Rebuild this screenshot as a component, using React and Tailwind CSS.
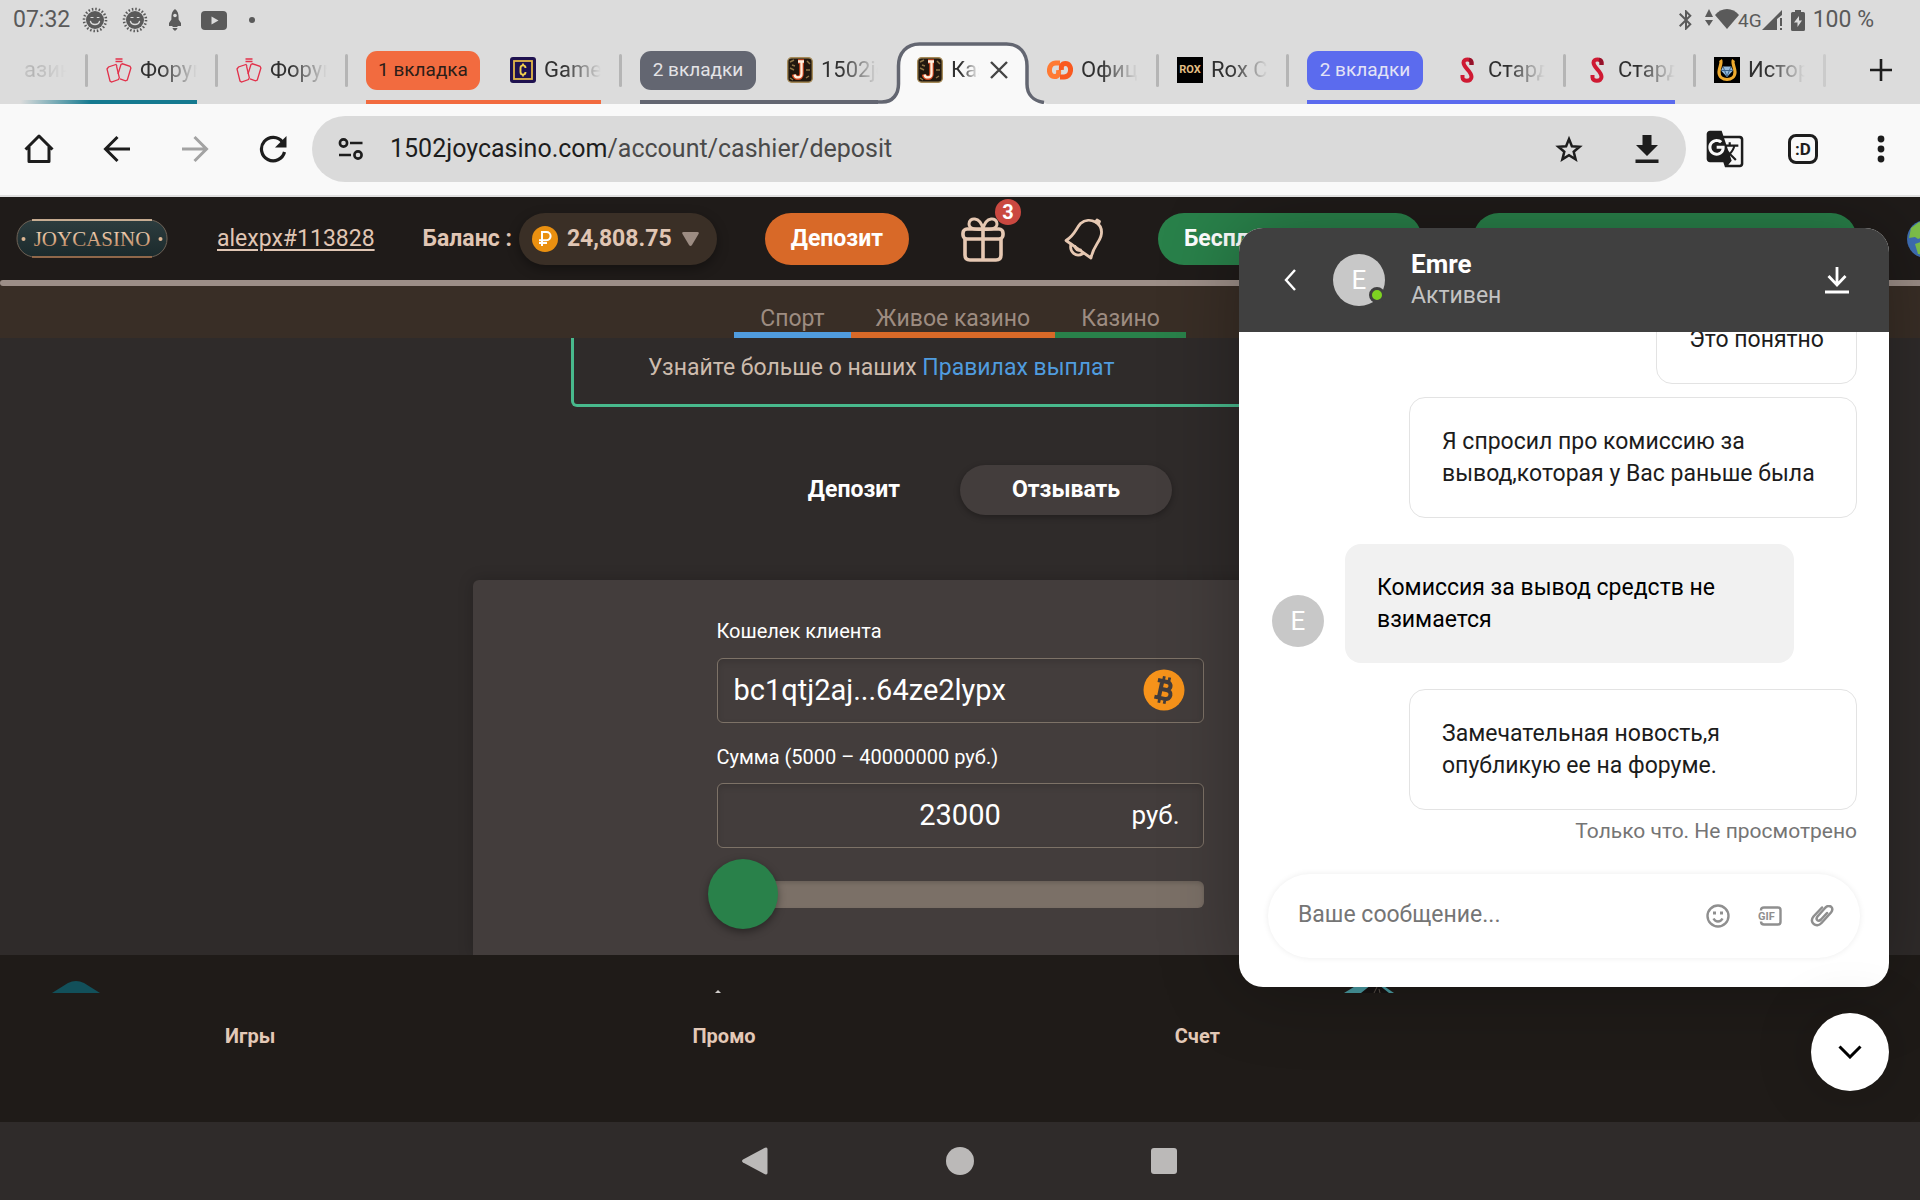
import { useState } from "react";
import { MdBluetooth, MdGTranslate } from "react-icons/md";

// Status bar icons

function SunIcon() {
    return (
        <svg viewBox="0 0 26 26" className="w-[26px] h-[26px]">
            <circle cx="13" cy="13" r="11" fill="none" stroke="#5a5a5a" strokeWidth="2.6" strokeDasharray="1.5 1.95" />
            <circle cx="13" cy="13" r="9" fill="#5a5a5a" />
            <path d="M8.5 10.5h3M14.8 10.5h2.6" stroke="#dcdcdc" strokeWidth="1.2" />
            <path d="M8.5 14.5c1 4 8 4 9 0" fill="none" stroke="#dcdcdc" strokeWidth="1.3" strokeLinecap="round" />
        </svg>
    );
}

function RocketIcon() {
    return (
        <svg viewBox="0 0 14 22" className="w-[14px] h-[22px]">
            <path d="M7 0c3 2 3.600 5 3.600 9v1.500L13 14v3h-3l-1 1H5l-1-1H1v-3l2.400-3.500V9C3.400 5 4 2 7 0z" fill="#5a5a5a" />
            <circle cx="7" cy="6.500" r="1.800" fill="#dcdcdc" />
            <path d="M4.500 19c.5 1.500 1.500 2 2.500 3 1-1 2-1.500 2.500-3z" fill="#5a5a5a" />
        </svg>
    );
}

function YoutubeIcon() {
    return (
        <svg viewBox="0 0 26 19" className="w-[26px] h-[19px]">
            <rect width="26" height="19" rx="4" fill="#5a5a5a" />
            <path d="M10.500 5.500v8l7-4z" fill="#dcdcdc" />
        </svg>
    );
}

// Favicons

function CardsIcon() {
    return (
        <svg viewBox="0 0 26 26" className="w-[26px] h-[26px] shrink-0" fill="none" stroke="#e2304a" strokeWidth="1.3">
            <path d="M9.500 2h7M9.500 4.500h7" />
            <path d="M11 9 10 7.500 2.500 10 1 12l3 12 1.500 1 7-2.500.8-1.800L10.500 9" />
            <path d="M12 17l3-9.500 1.500-.7 7.500 2.500.9 1.700-3.600 12-1.800.8-5.500-2" />
        </svg>
    );
}

function GameIcon() {
    return (
        <svg viewBox="0 0 26 26" className="w-[26px] h-[26px] shrink-0">
            <rect width="26" height="26" rx="3" fill="#1f1250" />
            <rect x="4" y="4" width="18" height="18" fill="none" stroke="#e3b84a" strokeWidth="1.800" />
            <path d="M15.500 11c0-3.500-5-3.500-5 0v4c0 3.500 5 3.500 5 0M13 6.500v2M13 17.500v2" fill="none" stroke="#f2d04f" strokeWidth="1.900" />
        </svg>
    );
}

function JoyIcon() {
    return (
        <svg viewBox="0 0 26 26" className="w-[26px] h-[26px] shrink-0">
            <rect x=".7" y=".7" width="24.600" height="24.600" rx="4" fill="#21180f" stroke="#a58a58" strokeWidth="1.400" />
            <path d="M3 5l4-2M3 11l4 2M20 4l3 3M19 13h4M19 21l3-2M3 21l3 2M5 8l3 1" stroke="#8d7446" strokeWidth="1.500" />
            <path d="M11 4.500h6M14.500 5v12c0 5-7 5-7.500.5" fill="none" stroke="#d8481f" strokeWidth="4.500" />
            <path d="M11 4.500h6M14.500 5v12c0 4.500-6.500 4.500-7 .5" fill="none" stroke="#fff1df" strokeWidth="2.300" />
        </svg>
    );
}

function LinkIcon() {
    return (
        <svg viewBox="0 0 26 26" className="w-[26px] h-[26px] shrink-0" fill="none" strokeWidth="5">
            <path d="M13 6H9C.5 6 .5 19.500 7.500 19.500c4 0 4.500-3 4-6.500" stroke="#ff7a33" />
            <path d="M13 20h4c8.500 0 8.500-13.500 1.500-13.500-4 0-4.500 3-4 6.500" stroke="#f9591f" />
        </svg>
    );
}

function RoxIcon() {
    return (
        <span className="w-[26px] h-[26px] shrink-0 bg-black text-[#e2bd84] text-[11px] font-bold flex items-center justify-center">
            ROX
        </span>
    );
}

function StardaIcon() {
    return (
        <svg viewBox="0 0 26 26" className="w-[26px] h-[26px] shrink-0" fill="none">
            <path d="M17.500 8V5.500c0-4-8-4-8 0C9.500 11 17.500 14 17.500 20c0 5-9 5-9 .5V18" stroke="#cf1a33" strokeWidth="4" />
            <path d="M17.500 8V5.500c0-1.500-1-2.500-2.500-2.900" stroke="#94122a" strokeWidth="4" />
        </svg>
    );
}

function HorseshoeIcon() {
    return (
        <svg viewBox="0 0 26 26" className="w-[26px] h-[26px] shrink-0">
            <rect width="26" height="26" fill="#000" />
            <path d="M6.500 3c2 3-1.500 7-1.500 12 0 10 16 10 16 0 0-5-3.500-9-1.500-12" fill="none" stroke="#eeaa2e" strokeWidth="3.200" />
            <path d="M9 9.500h8l2 4-6 6.500-6-6.500z" fill="#93b9dc" />
            <path d="M9 9.500l4 10 4-10M7 13.500h12" stroke="#3c648c" fill="none" />
        </svg>
    );
}

const toolButton = "w-[78px] h-[66px] shrink-0 flex items-center justify-center text-[#1d1d1d]";

function FadeText({ children, width }) {
    return (
        <span className={`${width} overflow-hidden whitespace-nowrap text-[22px] leading-[30px] text-[#303030] [mask-image:linear-gradient(to_right,#000_35%,transparent)]`}>
            {children}
        </span>
    );
}

function Tab({ icon, title }) {
    return (
        <button className="w-[91px] shrink-0 flex items-center gap-2">
            {icon}
            <FadeText width="w-[57px]">{title}</FadeText>
        </button>
    );
}

function Divider() {
    return <span className="w-[3px] h-[33px] mx-[18px] shrink-0 rounded-sm bg-[#b5b5b5]" />;
}

function TabGroup({ className, children }) {
    return <div className={`flex items-center h-full shrink-0 border-b-4 ${className}`}>{children}</div>;
}

function StatusBar() {
    return (
        <div className="h-10 flex items-center px-[13px] text-[23px] leading-[30px] text-[#5a5a5a]">
            <span>07:32</span>
            <div className="flex items-center ml-3">
                <SunIcon />
                <span className="w-[14px]" />
                <SunIcon />
                <span className="w-[20px]" />
                <RocketIcon />
                <span className="w-[19px]" />
                <YoutubeIcon />
                <span className="w-[6px] h-[6px] ml-[22px] rounded-full bg-[#5a5a5a]" />
            </div>
            <div className="flex items-center ml-auto mr-[33px]">
                <MdBluetooth size={24} />
                <svg viewBox="0 0 78 22" className="w-[78px] h-[22px] ml-[7px] shrink-0" fill="currentColor">
                    <path d="M0 8l4-8 4 8zM0 11h8l-4 6z" />
                    <path d="M22 20L10 6c6-8 18-8 24 0z" />
                    <text x="33" y="18" fontSize="19">4G</text>
                    <path d="M57 21L77 1v5l-5 4v11zM75 9h2v8h-2zM75 19h2v2h-2z" />
                </svg>
                <svg viewBox="0 0 14 21" className="w-[14px] h-[21px] mx-2" fill="currentColor">
                    <path d="M4 0h6v2h2.500q1.500 0 1.500 1.500v16q0 1.500-1.500 1.500h-11Q0 21 0 19.500v-16Q0 2 1.500 2H4z" />
                    <path d="M8 6l-5 6.500h3.500V17l4.500-6.500H8z" fill="#dcdcdc" />
                </svg>
                <span>100 %</span>
            </div>
        </div>
    );
}

function TabStrip() {
    return (
        <div className="h-16 flex items-center overflow-hidden">
            <div className="relative h-full flex items-center border-b-4 border-transparent shrink-0">
                <span className="w-[67px] pl-6 overflow-hidden text-[22px] leading-[30px] text-[#b5b5b5] [mask-image:linear-gradient(to_right,transparent_20%,#000_50%,transparent)]">
                    азин
                </span>
                <Divider />
                <Tab icon={<CardsIcon />} title="Форум" />
                <span className="absolute left-5 right-0 -bottom-1 h-1 bg-linear-to-r from-transparent to-[#157a90] to-40%" />
            </div>
            <TabGroup className="border-transparent">
                <Divider />
                <Tab icon={<CardsIcon />} title="Форум" />
                <Divider />
            </TabGroup>
            <TabGroup className="border-[#f26b3f]">
                <button className="w-[114px] h-[39px] mr-[30px] rounded-[11px] bg-[#f26b3f] text-[19px] text-[#2b1d18]">1 вкладка</button>
                <Tab icon={<GameIcon />} title="Games" />
            </TabGroup>
            <TabGroup className="border-transparent">
                <Divider />
            </TabGroup>
            <TabGroup className="border-[#636671]">
                <button className="w-[116px] h-[39px] mr-[31px] rounded-[11px] bg-[#636671] text-[19px] text-[#e3e3e6]">2 вкладки</button>
                <Tab icon={<JoyIcon />} title="1502joy" />
            </TabGroup>

            {/* Active tab */}
            <div className="relative w-[169px] h-full shrink-0">
                <svg viewBox="0 0 169 64" className="absolute inset-0 w-full h-full">
                    <path
                        d="M0 62.500h4C15 62 21.500 56 21.500 44V26c0-13 7-22.500 20-22.500h87c13 0 19.500 9.500 19.500 22.500v18c0 10 6 17 17 18.500L169 64H0z"
                        fill="#f9f9f9"
                    />
                    <path
                        d="M0 62h4C15 62 20.500 54 20.500 44V26c0-13 8-22 21-22h87c13 0 20.500 9 20.500 22v18c0 10 6 17 17 18.500"
                        fill="none"
                        stroke="#636671"
                        strokeWidth="3.500"
                    />
                </svg>
                <div className="relative h-[60px] mx-[39px] flex items-center">
                    <JoyIcon />
                    <span className="w-2 shrink-0" />
                    <FadeText width="w-[28px] shrink-0">Каз</FadeText>
                    <button aria-label="Закрыть вкладку" className="ml-auto">
                        <svg viewBox="0 0 18 18" className="w-[18px] h-[18px]">
                            <path d="M1 1l16 16M17 1L1 17" stroke="#444" strokeWidth="2.400" />
                        </svg>
                    </button>
                </div>
            </div>

            <TabGroup className="border-transparent">
                <Tab icon={<LinkIcon />} title="Офици" />
                <Divider />
                <Tab icon={<RoxIcon />} title="Rox Ca" />
                <Divider />
            </TabGroup>
            <TabGroup className="border-[#5b6bee]">
                <button className="w-[116px] h-[39px] mr-[31px] rounded-[11px] bg-[#5b6bee] text-[19px] text-[#e3e3f6]">2 вкладки</button>
                <Tab icon={<StardaIcon />} title="Старда" />
                <Divider />
                <Tab icon={<StardaIcon />} title="Старда" />
            </TabGroup>
            <TabGroup className="border-transparent">
                <Divider />
                <Tab icon={<HorseshoeIcon />} title="Истор" />
                <span className="w-[3px] h-[33px] ml-[18px] rounded-sm bg-[#cbcbcb]" />
            </TabGroup>
            <button aria-label="Новая вкладка" className="ml-auto mr-[28px] mb-1 shrink-0">
                <svg viewBox="0 0 22 22" className="w-[22px] h-[22px]">
                    <path d="M11 0v22M0 11h22" stroke="#1d1d1d" strokeWidth="2.600" />
                </svg>
            </button>
        </div>
    );
}

function Toolbar() {
    return (
        <div className="flex items-center pt-3 pb-[13px] bg-[#f9f9f9] border-b-2 border-[#e0e0e0]">
            <button aria-label="Домой" className={toolButton}>
                <svg viewBox="0 0 30 30" className="w-[30px] h-[30px]" fill="none" stroke="currentColor" strokeWidth="3" strokeLinejoin="round">
                    <path d="M1.500 15.500L15 2l13.500 13.500M5 13v14.500h20V13" />
                </svg>
            </button>
            <button aria-label="Назад" className={toolButton}>
                <svg viewBox="0 0 28 28" className="w-[28px] h-[28px]" fill="none" stroke="currentColor" strokeWidth="3">
                    <path d="M27 14H3M14.500 2L2.500 14l12 12" />
                </svg>
            </button>
            <button aria-label="Вперёд" className={toolButton}>
                <svg viewBox="0 0 28 28" className="w-[28px] h-[28px]" fill="none" stroke="#a3a3a3" strokeWidth="3">
                    <path d="M1 14h24M13.500 2l12 12-12 12" />
                </svg>
            </button>
            <button aria-label="Обновить" className={toolButton}>
                <svg viewBox="0 0 28 28" className="w-[28px] h-[28px]" fill="none" stroke="currentColor" strokeWidth="3.200">
                    <path d="M23.500 7A11.700 11.700 0 1 0 25.500 17" />
                    <path d="M27.500 1v11.500H16z" fill="currentColor" stroke="none" />
                </svg>
            </button>

            <div className="flex-1 min-w-0 h-[66px] flex items-center rounded-full bg-[#dadada]">
                <button aria-label="Сведения о сайте" className={toolButton}>
                    <svg viewBox="0 0 26 22" className="w-[26px] h-[22px]" fill="none" stroke="currentColor" strokeWidth="2.600">
                        <circle cx="5.500" cy="5" r="3.600" />
                        <circle cx="20" cy="17" r="3.600" />
                        <path d="M12 5h12.500M1 17h12" />
                    </svg>
                </button>
                <button className="flex-1 min-w-0 text-left text-[25px] leading-[34px] text-[#4a4a4a] truncate">
                    <span className="text-[#1d1d1d]">1502joycasino.com</span>/account/cashier/deposit
                </button>
                <button aria-label="В избранное" className={toolButton}>
                    <svg viewBox="0 0 28 28" className="w-[28px] h-[28px]" fill="none" stroke="currentColor" strokeWidth="2.500">
                        <path d="M14 4l2.900 7.200 7.700.6-5.900 5 1.900 7.500L14 20.200l-6.600 4.100 1.900-7.500-5.900-5 7.700-.6z" />
                    </svg>
                </button>
                <button aria-label="Скачать" className={toolButton}>
                    <svg viewBox="0 0 24 28" className="w-[24px] h-[28px]" fill="currentColor">
                        <path d="M7.500 0h9v10H23L12 21 1 10h6.500zM.5 24.500h23V28H.5z" />
                    </svg>
                </button>
            </div>

            <button aria-label="Перевести" className={toolButton}>
                <MdGTranslate size={40} />
            </button>
            <button aria-label="Вкладки" className={toolButton}>
                <span className="w-[30px] h-[30px] flex items-center justify-center rounded-[8px] border-3 border-[#1d1d1d] text-[17px] leading-none font-bold">:D</span>
            </button>
            <button aria-label="Меню" className={toolButton}>
                <svg viewBox="0 0 8 28" className="w-[8px] h-[28px]" fill="currentColor">
                    <circle cx="4" cy="4" r="3.400" />
                    <circle cx="4" cy="14" r="3.400" />
                    <circle cx="4" cy="24" r="3.400" />
                </svg>
            </button>
        </div>
    );
}

function Logo() {
    return (
        <svg viewBox="0 0 152 40" className="w-[152px] h-[40px] shrink-0">
            <defs>
                <linearGradient id="copper" x1="0" y1="0" x2="0" y2="1">
                    <stop offset="0" stopColor="#f8e4cc" />
                    <stop offset=".5" stopColor="#deb08c" />
                    <stop offset="1" stopColor="#a8744f" />
                </linearGradient>
                <linearGradient id="plate" x1="0" y1="0" x2="0" y2="1">
                    <stop offset="0" stopColor="#2d3d3f" />
                    <stop offset="1" stopColor="#1b2a2c" />
                </linearGradient>
            </defs>
            <rect x="1" y="1" width="150" height="37" rx="18" fill="url(#plate)" stroke="#6d6155" />
            <path d="M16 1h120" stroke="#f0cfae" strokeWidth="1.500" />
            <path d="M16 38h120" stroke="#a8744f" strokeWidth="1.500" />
            <circle cx="7.500" cy="20" r="2" fill="#dcb592" />
            <circle cx="144.500" cy="20" r="2" fill="#dcb592" />
            <text x="76" y="27" textAnchor="middle" fontFamily="Liberation Serif, serif" fontSize="21" fill="url(#copper)">JOYCASINO</text>
        </svg>
    );
}

function SiteHeader() {
    return (
        <header className="h-[83px] flex items-center overflow-hidden bg-[#1f1b19] pl-[16px] text-[23px] leading-[30px] text-[#e0c6b4] shrink-0">
            <Logo />
            <a href="#profile" className="ml-[49px] underline underline-offset-3 decoration-2 shrink-0">alexpx#113828</a>
            <span className="ml-[48px] font-bold whitespace-nowrap shrink-0">Баланс :</span>
            <button className="ml-[7px] h-[52px] px-[13px] w-[198px] shrink-0 flex items-center rounded-full bg-[#3a2f26] font-bold shadow-[0_4px_12px_rgba(0,0,0,0.35)]">
                <svg viewBox="0 0 26 26" className="w-[26px] h-[26px] shrink-0">
                    <circle cx="13" cy="13" r="13" fill="#ea9010" />
                    <path d="M10 20V6h4.500a4 4 0 0 1 0 8.200H7M7 17h8" fill="none" stroke="#fff" strokeWidth="2" />
                </svg>
                <span className="ml-[9px]">24,808.75</span>
                <svg viewBox="0 0 17 14" className="w-[17px] h-[14px] ml-auto mr-[5px] shrink-0">
                    <path d="M1.500 0h14q2 0 1 2L10 13q-1.500 2-3 0L.5 2q-1-2 1-2z" fill="#9c8c82" />
                </svg>
            </button>
            <button className="ml-[48px] w-[144px] h-[52px] shrink-0 rounded-full bg-[#d86928] text-white font-bold">Депозит</button>
            <button aria-label="Подарки" className="relative ml-[52px] w-[44px] shrink-0">
                <svg viewBox="0 0 44 46" className="w-[44px] h-[46px]" fill="none" stroke="#e6c8b2" strokeWidth="3.600">
                    <rect x="2" y="13" width="40" height="10" rx="4" />
                    <path d="M4 23v16q0 5 5 5h26q5 0 5-5V23M22 13v31" />
                    <path d="M22 13C18 14 8 14 8 8c0-7 11-8 14 5 3-13 14-12 14-5 0 6-10 6-14 5z" strokeWidth="3" />
                </svg>
                <span className="absolute -top-[17px] left-[34px] w-[26px] h-[26px] flex items-center justify-center rounded-full bg-[#ca4840] text-white text-[20px] leading-none font-bold">
                    3
                </span>
            </button>
            <button aria-label="Уведомления" className="ml-[59px] shrink-0">
                <svg viewBox="0 0 40 42" className="w-[40px] h-[42px]" fill="none" stroke="#e6c8b2" strokeWidth="2.800" strokeLinejoin="round" strokeLinecap="round">
                    <path d="M2 22.500C11 17 11.500 11 16.500 5.500 21 1.500 27 1.500 31.500 4c5 3 7 8 5.500 14-2 7-8 11-10 22z" />
                    <path d="M31.500 4l1.500-2 2.500 1.500-1 2.500M7 26c-2 8 5 14 12 9.500M11 28.500c.5 3 3 4.500 5.500 3.500" />
                </svg>
            </button>
            <button className="ml-[54px] pl-[26px] w-[264px] h-[52px] shrink-0 rounded-full bg-[#29814a] text-left text-white font-bold whitespace-nowrap">Бесплатно</button>
            <button aria-label="Бонусы" className="ml-[51px] w-[384px] h-[52px] shrink-0 rounded-full bg-[#29814a]" />
            <button aria-label="Язык" className="ml-[50px] shrink-0">
                <svg viewBox="0 0 38 38" className="w-[38px] h-[38px]">
                    <circle cx="19" cy="19" r="19" fill="#3f6fb5" />
                    <path d="M4 8l8-6 8 3-5 6 2 6-6 2-3-2-6 1zM8 24l8-3 6 6-3 8-8-1z" fill="#7fc24b" />
                </svg>
            </button>
        </header>
    );
}

function SectionTabs() {
    return (
        <nav className="h-[52px] shrink-0 flex items-end justify-center bg-[#392e26] text-[23px] leading-[26px] text-[#9d8c81]">
            <a href="#sport" className="px-[26px] border-b-6 border-[#509cdf]">Спорт</a>
            <a href="#live" className="px-[25px] border-b-6 border-[#d86928]">Живое казино</a>
            <a href="#casino" className="px-[26px] border-b-6 border-[#29814a]">Казино</a>
        </nav>
    );
}

function WithdrawForm() {
    const [amount, setAmount] = useState(23000);
    const field = "w-full h-[65px] rounded-[6px] border border-[#7d7267] bg-transparent text-[29px] text-white outline-none shadow-[inset_0_3px_6px_rgba(0,0,0,0.12)]";
    return (
        <section className="flex-1 w-full max-w-[974px] mt-[65px] pt-[36px] rounded-t-[6px] bg-[#433d3c] shadow-[0_0_16px_rgba(0,0,0,0.2)]">
            <div className="w-[487px] mx-auto text-white">
                <label htmlFor="wallet" className="block text-[20px] leading-[30px]">Кошелек клиента</label>
                <div className="relative mt-3">
                    <input id="wallet" readOnly value="bc1qtj2aj...64ze2lypx" className={`${field} pl-[16px] pr-20 pb-0.5`} />
                    <svg viewBox="0 0 42 42" className="absolute right-[19px] top-[11px] w-[42px] h-[42px]">
                        <circle cx="21" cy="21" r="20.500" fill="#f7931a" />
                        <g transform="rotate(12 21 21)" fill="none" stroke="#433d3c" strokeWidth="4">
                            <path d="M13 12.500h9.500c5.500 0 5.500 8 0 8H17h6.500c6.500 0 6.500 9 0 9H13M17.500 12v18" />
                            <path d="M18.500 7.500v4.500M24 7.500v4.500M18.500 30v4.500M24 30v4.500" strokeWidth="2.800" />
                        </g>
                    </svg>
                </div>
                <label htmlFor="amount" className="block mt-[19px] text-[20px] leading-[30px]">Сумма (5000 – 40000000 руб.)</label>
                <div className="relative mt-[11px]">
                    <input id="amount" value={amount} onChange={(e) => setAmount(e.target.value)} className={`${field} text-center pb-0.5`} />
                    <span className="absolute right-[24px] top-[16px] text-[26px] leading-[32px]">руб.</span>
                </div>
                <div className="relative mt-[33px] h-[27px] rounded-[6px] bg-[#7b7067] shadow-[inset_0_2px_4px_rgba(0,0,0,0.15)]">
                    <input
                        type="range"
                        aria-label="Сумма"
                        min="5000"
                        max="40000000"
                        value={amount}
                        onChange={(e) => setAmount(e.target.value)}
                        className="absolute -left-[9px] -top-[22px] w-[497px] h-[70px] appearance-none bg-transparent [&::-webkit-slider-thumb]:appearance-none [&::-webkit-slider-thumb]:w-[70px] [&::-webkit-slider-thumb]:h-[70px] [&::-webkit-slider-thumb]:rounded-full [&::-webkit-slider-thumb]:bg-[#29814a] [&::-webkit-slider-thumb]:shadow-[0_3px_8px_rgba(0,0,0,0.4)]"
                    />
                </div>
            </div>
        </section>
    );
}

function Cashier() {
    return (
        <main className="flex-1 min-h-0 flex flex-col items-center overflow-hidden bg-[#2f2b2a] text-[23px] leading-[30px]">
            <div className="w-full max-w-[778px] pt-[15px] pb-[21px] pl-[74px] border-3 border-t-0 border-[#48b98c] rounded-b-[6px] text-[#cdbcae]">
                Узнайте больше о наших <a href="#rules" className="text-[#509cdf]">Правилах выплат</a>
            </div>
            <div className="flex pl-2 mt-[58px] gap-2 text-white font-bold">
                <button className="h-[50px] px-[52px] rounded-full">Депозит</button>
                <button className="h-[50px] px-[52px] rounded-full bg-[#433d3c] shadow-[0_2px_6px_rgba(0,0,0,0.3)]">Отзывать</button>
            </div>
            <WithdrawForm />
        </main>
    );
}

function SiteFooter() {
    return (
        <footer className="h-[167px] shrink-0 bg-[#1f1b18] text-[20px] leading-[26px] font-bold text-[#e3c9b7]">
            {/* Tops of the banners that scroll under the menu */}
            <div className="h-[38px] flex items-end overflow-hidden">
                <svg viewBox="0 0 48 12" className="w-[48px] h-[12px] ml-[52px]">
                    <path d="M0 12L16 2q8-4 16 0l16 10z" fill="#12505a" />
                </svg>
                <svg viewBox="0 0 6 3" className="w-[6px] h-[3px] ml-[615px]">
                    <path d="M0 3l3-3 3 3z" fill="#d0cdca" />
                </svg>
                <svg viewBox="0 0 50 12" className="w-[50px] h-[12px] ml-[623px]">
                    <path d="M0 12L18 1h16l16 11z" fill="#4a9ca3" />
                    <path d="M17 12l10-8h8l10 8z" fill="#171313" />
                    <path d="M30 12l3-6M36 12l-1-4" stroke="#5a5049" />
                </svg>
            </div>
            <nav className="flex pt-[30px]">
                <a href="#games" className="w-[24.4%] pl-[225px]">Игры</a>
                <a href="#promo" className="w-[24.6%] ml-[224px]">Промо</a>
                <a href="#account" className="ml-[10px]">Счет</a>
            </nav>
        </footer>
    );
}

function Avatar() {
    return (
        <span className="w-[52px] h-[52px] shrink-0 flex items-center justify-center rounded-full bg-[#c8c8c8] text-white text-[26px] leading-none">E</span>
    );
}

function Bubble({ children }) {
    return <p className="self-end max-w-[448px] px-[32px] pt-7 pb-[27px] rounded-[16px] border border-[#e3e3e3] text-[#1c1c1c]">{children}</p>;
}

function Chat() {
    return (
        <aside className="absolute top-[31px] right-[31px] bottom-[135px] w-[650px] flex flex-col overflow-hidden rounded-[24px] bg-white shadow-[0_0_80px_rgba(0,0,0,0.3)] text-[23px] leading-[32px]">
            <div className="h-[104px] shrink-0 flex items-center pl-[45px] pr-[40px] bg-[#404040]">
                <button aria-label="Назад">
                    <svg viewBox="0 0 12 22" className="w-[12px] h-[22px]">
                        <path d="M11 1L2 11l9 10" fill="none" stroke="#fff" strokeWidth="2.400" />
                    </svg>
                </button>
                <div className="relative ml-[37px]">
                    <Avatar />
                    <span className="absolute right-0 bottom-[3px] w-4 h-4 rounded-full border-3 border-[#404040] bg-[#7ed321]" />
                </div>
                <div className="ml-[26px]">
                    <div className="text-[26px] font-bold text-white">Emre</div>
                    <div className="text-[#c3c3c3]">Активен</div>
                </div>
                <button aria-label="Свернуть" className="ml-auto">
                    <svg viewBox="0 0 24 27" className="w-[24px] h-[27px]" fill="none" stroke="#fff" strokeWidth="2.800">
                        <path d="M12 0v17M3.500 9l8.500 9 8.500-9M0 25h24" />
                    </svg>
                </button>
            </div>

            <div className="flex-1 min-h-0 overflow-hidden flex flex-col justify-end pl-[33px] pr-8">
                <Bubble>Это понятно</Bubble>
                <span className="h-[13px] shrink-0" />
                <Bubble>Я спросил про комиссию за вывод,которая у Вас раньше была</Bubble>
                <div className="flex items-end gap-[21px] my-[26px]">
                    <div className="pb-4">
                        <Avatar />
                    </div>
                    <p className="w-[449px] px-[32px] pt-7 pb-[27px] rounded-[16px] bg-[#f1f1f1] text-black">Комиссия за вывод средств не взимается</p>
                </div>
                <div className="self-end w-[448px] px-[32px] pt-7 pb-[27px] rounded-[16px] border border-[#e3e3e3] text-[#1c1c1c]">
                    Замечательная новость,я<br />опубликую ее на форуме.
                </div>
                <p className="self-end mt-[5px] text-[21px] text-[#757575]">Только что. Не просмотрено</p>
            </div>

            <div className="h-[84px] shrink-0 mt-[27px] mb-[29px] mx-[29px] pl-[30px] pr-[26px] flex items-center rounded-full shadow-[0_0_6px_rgba(0,0,0,0.08)] text-[#8f8f8f]">
                <input aria-label="Ваше сообщение" placeholder="Ваше сообщение..." className="flex-1 min-w-0 bg-transparent outline-none pb-0.5 placeholder:text-[#757575]" />
                <button aria-label="Смайлы">
                    <svg viewBox="0 0 24 24" className="w-[24px] h-[24px]" fill="none" stroke="currentColor" strokeWidth="2.400">
                        <circle cx="12" cy="12" r="10.500" />
                        <path d="M7.500 14.500c2 4 7 4 9 0" />
                        <path d="M8.500 7.500v3M15.500 7.500v3" strokeWidth="3" />
                    </svg>
                </button>
                <button aria-label="GIF" className="ml-[28px]">
                    <svg viewBox="0 0 24 20" className="w-[24px] h-[20px]" fill="none" stroke="currentColor" strokeWidth="2.400">
                        <path d="M3 4.500q0-3 3-3h14q2.500 0 2.500 2.500v12q0 2.500-2.500 2.500H6q-3 0-3-3" />
                        <text x="0" y="14" fontSize="11" fontWeight="700" fill="currentColor" stroke="none">GIF</text>
                    </svg>
                </button>
                <button aria-label="Прикрепить файл" className="ml-[28px]">
                    <svg viewBox="0 0 24 22" className="w-[24px] h-[22px]" fill="none" stroke="currentColor" strokeWidth="2.500" strokeLinecap="round">
                        <path d="M12 2.500L3.500 11.500c-5 6 3 12 8 6.500l9.500-10.500c4-5-2-8.500-5.500-5L7.500 11.500c-2.500 3.500 1 5.500 3.500 3L17 8" />
                    </svg>
                </button>
            </div>
        </aside>
    );
}

function SystemNav() {
    return (
        <div className="h-[78px] shrink-0 pr-[3px] flex items-center justify-center gap-[177px] bg-[#2f2b2a]">
            <button aria-label="Назад">
                <svg viewBox="0 0 28 28" className="w-[28px] h-[28px]">
                    <path d="M2 12.500L24 .7q2.500-1 2.500 1.500v23.600q0 2.500-2.500 1.500L2 15.500q-2-1.500 0-3z" fill="#bbb9b8" />
                </svg>
            </button>
            <button aria-label="Домой">
                <span className="block w-[28px] h-[28px] rounded-full bg-[#bbb9b8]" />
            </button>
            <button aria-label="Недавние">
                <span className="block w-[26px] h-[26px] rounded-[3px] bg-[#bbb9b8]" />
            </button>
        </div>
    );
}

export default function App() {
    return (
        <div className="min-h-screen flex flex-col bg-[#dcdcdc] font-['Roboto','Noto_Sans',sans-serif]">
            <StatusBar />
            <TabStrip />
            <Toolbar />
            <div className="relative flex-1 flex flex-col overflow-hidden bg-[#392e26]">
                <SiteHeader />
                <div className="h-[6px] shrink-0 rounded-l-full bg-[#9c8e87]" />
                <SectionTabs />
                <Cashier />
                <SiteFooter />
                <Chat />
                <button aria-label="Закрыть чат" className="absolute right-[31px] bottom-[31px] w-[78px] h-[78px] flex items-center justify-center rounded-full bg-white shadow-[0_0_60px_rgba(0,0,0,0.2)]">
                    <svg viewBox="0 0 24 14" className="w-[24px] h-[14px]">
                        <path d="M1.500 1.500L12 12 22.500 1.500" fill="none" stroke="#000" strokeWidth="3" />
                    </svg>
                </button>
            </div>
            <SystemNav />
        </div>
    );
}
